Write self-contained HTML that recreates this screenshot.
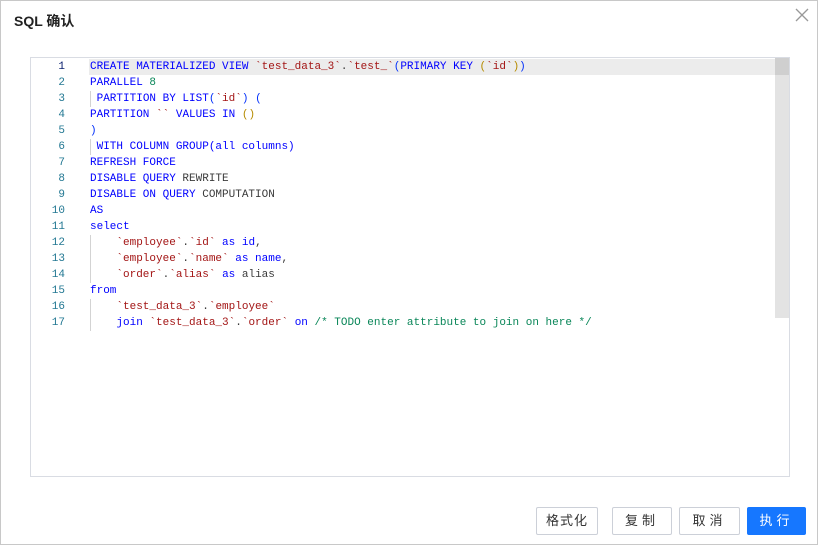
<!DOCTYPE html>
<html><head><meta charset="utf-8"><style>
*{margin:0;padding:0;box-sizing:border-box}
body{width:818px;height:545px;background:#fff;font-family:"Liberation Sans","Noto Sans CJK SC",sans-serif;position:relative;overflow:hidden}
.frame{position:absolute;left:0;top:0;width:818px;height:545px;border:1px solid #c8c8c8}
.title{position:absolute;left:14px;top:11px;font-size:14px;font-weight:bold;color:#222}
.close{position:absolute;left:795px;top:8px}
.ed{position:absolute;left:30px;top:57px;width:760px;height:420px;border:1px solid #d9dce3;overflow:hidden}
.hl{position:absolute;left:58px;top:1px;width:687px;height:16px;background:#ececec}
.sb{position:absolute;left:744px;top:0;width:15px;height:260px;background:#e3e3e3}
.sb2{position:absolute;left:744px;top:0;width:15px;height:17px;background:#cfcfcf}
.code{position:absolute;left:0;top:1px;font-family:"Liberation Mono",monospace;font-size:11px;line-height:16px;white-space:pre}
.ln{position:absolute;left:0;width:34px;text-align:right;color:#237893}
.ln.a{color:#0b216f}
.tx{position:absolute;left:59px;color:#3b3b3b}
.k{color:#0000ff}.s{color:#a31515}.n{color:#098658}.c{color:#098658}.p1{color:#0431fa}.p2{color:#b58b00}
.g{position:absolute;left:59px;width:1px;background:#d3d3d3}
.btn{position:absolute;top:507px;height:28px;border:1px solid #ccd0d8;border-radius:2px;font-size:13px;color:#333;text-align:center;line-height:26px;background:#fff;letter-spacing:1px}
.pri{background:#1677ff;border-color:#1677ff;color:#fff}
</style></head><body>
<div class="frame"></div>
<div class="title">SQL 确认</div>
<svg class="close" width="14" height="14" viewBox="0 0 14 14"><path d="M1 1L13 13M13 1L1 13" stroke="#999" stroke-width="1.3"/></svg>
<div class="ed">
<div class="hl"></div>
<div class="sb"></div><div class="sb2"></div>
<div class="g" style="top:33px;height:16px"></div>
<div class="g" style="top:81px;height:16px"></div>
<div class="g" style="top:177px;height:48px"></div>
<div class="g" style="top:241px;height:32px"></div>
<div class="code">
<div class="ln a" style="top:0">1</div><div class="ln" style="top:16px">2</div><div class="ln" style="top:32px">3</div><div class="ln" style="top:48px">4</div><div class="ln" style="top:64px">5</div><div class="ln" style="top:80px">6</div><div class="ln" style="top:96px">7</div><div class="ln" style="top:112px">8</div><div class="ln" style="top:128px">9</div><div class="ln" style="top:144px">10</div><div class="ln" style="top:160px">11</div><div class="ln" style="top:176px">12</div><div class="ln" style="top:192px">13</div><div class="ln" style="top:208px">14</div><div class="ln" style="top:224px">15</div><div class="ln" style="top:240px">16</div><div class="ln" style="top:256px">17</div>
<div class="tx" style="top:0"><span class="k">CREATE MATERIALIZED VIEW</span> <span class="s">`test_data_3`</span>.<span class="s">`test_`</span><span class="p1">(</span><span class="k">PRIMARY KEY</span> <span class="p2">(</span><span class="s">`id`</span><span class="p2">)</span><span class="p1">)</span></div>
<div class="tx" style="top:16px"><span class="k">PARALLEL</span> <span class="n">8</span></div>
<div class="tx" style="top:32px"> <span class="k">PARTITION BY LIST</span><span class="p1">(</span><span class="s">`id`</span><span class="p1">)</span> <span class="p1">(</span></div>
<div class="tx" style="top:48px"><span class="k">PARTITION</span> <span class="s">``</span> <span class="k">VALUES IN</span> <span class="p2">()</span></div>
<div class="tx" style="top:64px"><span class="p1">)</span></div>
<div class="tx" style="top:80px"> <span class="k">WITH COLUMN GROUP(all columns)</span></div>
<div class="tx" style="top:96px"><span class="k">REFRESH FORCE</span></div>
<div class="tx" style="top:112px"><span class="k">DISABLE QUERY</span> REWRITE</div>
<div class="tx" style="top:128px"><span class="k">DISABLE ON QUERY</span> COMPUTATION</div>
<div class="tx" style="top:144px"><span class="k">AS</span></div>
<div class="tx" style="top:160px"><span class="k">select</span></div>
<div class="tx" style="top:176px">    <span class="s">`employee`</span>.<span class="s">`id`</span> <span class="k">as id</span>,</div>
<div class="tx" style="top:192px">    <span class="s">`employee`</span>.<span class="s">`name`</span> <span class="k">as name</span>,</div>
<div class="tx" style="top:208px">    <span class="s">`order`</span>.<span class="s">`alias`</span> <span class="k">as</span> alias</div>
<div class="tx" style="top:224px"><span class="k">from</span></div>
<div class="tx" style="top:240px">    <span class="s">`test_data_3`</span>.<span class="s">`employee`</span></div>
<div class="tx" style="top:256px">    <span class="k">join</span> <span class="s">`test_data_3`</span>.<span class="s">`order`</span> <span class="k">on</span> <span class="c">/* TODO enter attribute to join on here */</span></div>
</div>
</div>
<div class="btn" style="left:536px;width:62px">格式化</div>
<div class="btn" style="left:612px;width:60px;letter-spacing:4px">复制</div>
<div class="btn" style="left:679px;width:61px;letter-spacing:4px">取消</div>
<div class="btn pri" style="left:747px;width:59px;letter-spacing:4px">执行</div>
</body></html>
